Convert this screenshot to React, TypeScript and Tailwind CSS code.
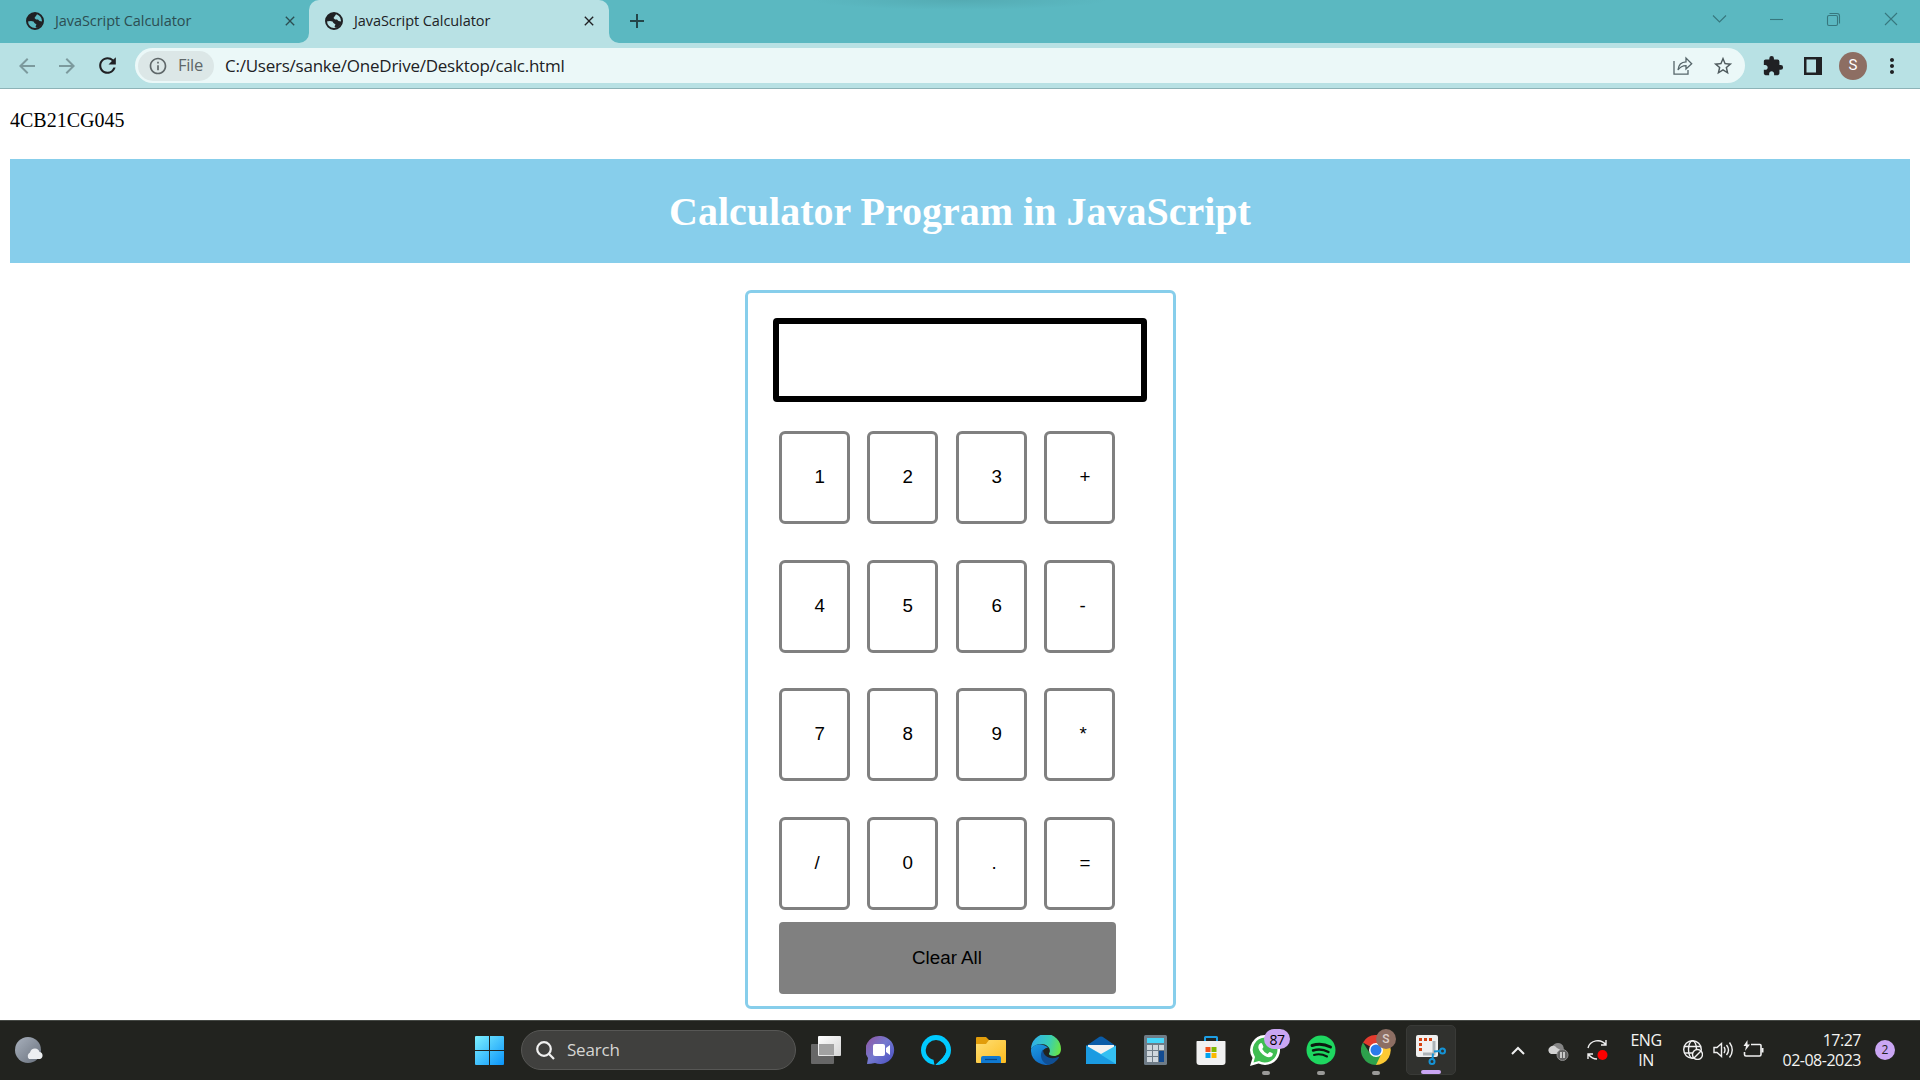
import type { ReactNode } from 'react';
import {
  MdArrowBack,
  MdArrowForward,
  MdClose,
  MdExtension,
  MdInfoOutline,
  MdMoreVert,
  MdRefresh,
  MdStarBorder,
} from 'react-icons/md';

function Globe() {
  return (
    <svg width="18" height="18" viewBox="0 0 18 18" className="ml-[2px] mr-[2px] shrink-0">
      <circle cx="9" cy="9" r="8" fill="none" stroke="#202124" strokeWidth="2" />
      <path d="M1 8C1.500 4 5 1 9.500 1L11 2.500L9.500 4.500L8.500 6L10 7.500H12L13.500 9L16 9.500L16.500 11L14 14.500L11 16L9.500 14.500L10.500 12.500L8.500 11L7.500 9.500L5 9L1.500 9.500Z" fill="#202124" />
    </svg>
  );
}

function Tab({ active }: { active?: boolean }) {
  return (
    <div
      className={
        active
          ? 'flex h-[43px] w-[300px] items-center rounded-t-[10px] bg-[#b8e1e4] pb-[2px] pl-[14px] text-[#202124]'
          : 'flex h-[43px] w-[299px] items-center pb-[2px] pl-[24px] text-[#2c4e52]'
      }
    >
      <Globe />
      <span className="ml-[9px] w-[227px] shrink-0 whitespace-nowrap text-[14.5px] tracking-[-0.07px]">
        JavaScript Calculator
      </span>
      <MdClose size={16} className="shrink-0" />
    </div>
  );
}

function Flare({ d }: { d: string }) {
  return (
    <svg width="10" height="10" className="shrink-0 self-end" viewBox="0 0 10 10">
      <path d={d} fill="#b8e1e4" />
    </svg>
  );
}

function TitleBar() {
  return (
    <div className="relative flex h-[43px] items-center bg-[#5bb8c1]">
      <div className="absolute left-[810px] top-0 h-[10px] w-[300px] bg-[radial-gradient(ellipse_at_top,#54abb3,#5bb8c1_70%)]" />
      <Tab />
      <Flare d="M10 0V10H0A10 10 0 0 0 10 0Z" />
      <Tab active />
      <Flare d="M0 0V10H10A10 10 0 0 1 0 0Z" />
      <svg width="16" height="16" viewBox="0 0 16 16" className="mb-[1px] ml-[10px]" stroke="#24464a" strokeWidth="2">
        <path d="M8 1V15M1 8H15" />
      </svg>
      <svg width="186" height="16" viewBox="0 0 186 16" className="mb-[6px] ml-auto mr-[22px]" fill="none" stroke="#37777e" strokeWidth="1.1">
        <path d="M1 4.500L7.500 11L14 4.500" />
        <path d="M58 8.500H71" />
        <rect x="115.500" y="4.500" width="10" height="10" rx="1.500" />
        <path d="M117.500 2.500H125Q127.500 2.500 127.500 5V12.500" />
        <path d="M173 2L185 14M185 2L173 14" />
      </svg>
    </div>
  );
}

function Toolbar() {
  return (
    <div className="flex h-[46px] items-center border-b border-[#8db3b7] bg-[#b8e1e4]">
      <MdArrowBack size={24} className="ml-[15px] text-[#7c9a9d]" />
      <MdArrowForward size={24} className="ml-[16px] text-[#7c9a9d]" />
      <MdRefresh size={25} className="ml-[16px] text-[#202124]" />
      <div className="ml-[15px] flex h-[35px] w-[1610px] items-center rounded-full bg-[#ebf8f8]">
        <div className="ml-[3px] flex h-[30px] w-[76px] items-center rounded-full bg-[#dce7e7] pl-[10px] text-[#5f6769]">
          <MdInfoOutline size={20} />
          <span className="ml-[10px] text-[16.500px] tracking-[-0.3px]">File</span>
        </div>
        <span className="ml-[11px] whitespace-nowrap text-[17px] tracking-[-0.24px] text-[#202124]">
          C:/Users/sanke/OneDrive/Desktop/calc.html
        </span>
        <svg width="20" height="20" viewBox="0 0 20 20" className="ml-auto" fill="none" stroke="#56666a" strokeWidth="1.300">
          <path d="M1 5V18.200H15V14" />
          <path d="M5 14C5.500 8.500 8.500 6 13 5.800V2L18.700 7.700L13 13V9.600C9.500 9.600 7 11 5 14Z" />
        </svg>
        <MdStarBorder size={22} className="ml-[19px] mr-[11px] text-[#4f5b5e]" />
      </div>
      <MdExtension size={22} className="ml-[17px] text-[#202124]" />
      <svg width="18" height="18" viewBox="0 0 18 18" className="ml-[20px]">
        <path d="M0 0H18V18H0ZM2.500 2.500V15.500H12V2.500Z" fill="#202124" fillRule="evenodd" />
      </svg>
      <div className="ml-[17px] flex h-7 w-7 items-center justify-center rounded-full bg-[#8d6e63] font-['Roboto'] text-[15px] text-white">
        S
      </div>
      <MdMoreVert size={24} className="ml-[13px] text-[#202124]" />
    </div>
  );
}

const keys = ['1', '2', '3', '+', '4', '5', '6', '-', '7', '8', '9', '*', '/', '0', '.', '='];

function Calculator() {
  return (
    <div className="mx-auto mt-[27px] h-[719px] w-[431px] rounded-[6px] border-[3px] border-[#87ceeb] font-['Liberation_Sans',sans-serif] text-[18.750px] text-black">
      <div className="ml-[25px] mt-[25px] h-[84px] w-[374px] rounded-[4px] border-[6px] border-black" />
      <div className="ml-[31px] mt-[29px] grid grid-cols-[88px_89px_88px_71px] grid-rows-[129px_128px_129px_93px]">
        {keys.map((k) => (
          <button
            key={k}
            className="flex h-[93px] w-[71px] items-center rounded-[6px] border-[3px] border-[#808080] pl-[33px] text-left"
          >
            {k}
          </button>
        ))}
      </div>
      <button className="ml-[31px] mt-[12px] block h-[72px] w-[337px] rounded-[4px] bg-[#808080]">Clear All</button>
    </div>
  );
}

function Slot({ children, dot }: { children: ReactNode; dot?: boolean }) {
  return (
    <div className="relative flex h-[50px] w-[55px] shrink-0 items-center justify-center">
      {children}
      {dot && <div className="absolute bottom-0 h-[4px] w-[8px] rounded-full bg-[#9a9a98]" />}
    </div>
  );
}

function Windows() {
  return (
    <svg width="29" height="29" viewBox="0 0 29 29">
      <defs>
        <linearGradient id="win" x1="0" y1="0" x2="1" y2="1">
          <stop offset="0" stopColor="#7df0ff" />
          <stop offset="1" stopColor="#0a94fa" />
        </linearGradient>
      </defs>
      <path fill="url(#win)" d="M1 0H14V14H0V1Q0 0 1 0ZM15 0H28Q29 0 29 1V14H15ZM0 15H14V29H1Q0 29 0 28ZM15 15H29V28Q29 29 28 29H15Z" />
    </svg>
  );
}

function TaskView() {
  return (
    <svg width="30" height="28" viewBox="0 0 30 28">
      <defs>
        <linearGradient id="tv" x1="0" y1="0" x2="1" y2="1">
          <stop offset="0" stopColor="#ffffff" />
          <stop offset="1" stopColor="#d5d5d5" />
        </linearGradient>
      </defs>
      <rect x="0" y="8" width="23" height="20" rx="1" fill="#676767" />
      <rect x="7" y="0" width="23" height="20" rx="1" fill="url(#tv)" />
      <path d="M8 8H23V19H8Z" fill="#a2a2a2" />
    </svg>
  );
}

function Chat() {
  return (
    <svg width="30" height="30" viewBox="0 0 30 30">
      <defs>
        <linearGradient id="chat" x1="0.100" y1="0.200" x2="0.900" y2="0.900">
          <stop offset="0" stopColor="#8a5fae" />
          <stop offset="0.450" stopColor="#7479cf" />
          <stop offset="1" stopColor="#5055c4" />
        </linearGradient>
      </defs>
      <path d="M15 1A14 14 0 1 1 9 28Q5 29 1 29L2 23A14 14 0 0 1 15 1Z" fill="url(#chat)" />
      <rect x="7" y="9" width="12" height="12" rx="2" fill="#fff" />
      <path d="M20 13L24 10V20L20 17Z" fill="#fff" />
    </svg>
  );
}

function Alexa() {
  return (
    <svg width="30" height="30" viewBox="0 0 30 30">
      <circle cx="15" cy="15" r="15" fill="#00caff" />
      <path d="M15 5A10.300 10.300 0 0 1 25.300 15C25.300 21 19 25 14.500 30L13.500 30L12.500 24.800C8 23.500 4.700 20 4.700 15A10.300 10.300 0 0 1 15 5Z" fill="#22231f" />
      <path d="M25.300 15C25.300 21 19 25 14.500 30A15 15 0 0 0 27 24Z" fill="#00caff" />
    </svg>
  );
}

function Explorer() {
  return (
    <svg width="30" height="28" viewBox="0 0 30 28">
      <defs>
        <linearGradient id="fold" x1="0" y1="0" x2="1" y2="1">
          <stop offset="0" stopColor="#ffdf75" />
          <stop offset="1" stopColor="#fcbc1f" />
        </linearGradient>
      </defs>
      <path d="M0 2Q0 1 1 1H10L13 4V10H0Z" fill="#e29d0b" />
      <path d="M0 8H10L13 4H29Q30 4 30 5V26Q30 27 29 27H1Q0 27 0 26Z" fill="url(#fold)" />
      <path d="M5 27V22Q5 20 7 20H23Q25 20 25 22V27Z" fill="#1079d0" />
      <path d="M9 23.500H21" stroke="#064788" strokeWidth="1.200" />
    </svg>
  );
}

function Edge() {
  return (
    <svg width="30" height="30" viewBox="0 0 30 30">
      <defs>
        <linearGradient id="edgeTop" x1="0" y1="0.500" x2="1" y2="0.700">
          <stop offset="0" stopColor="#2fb0ea" />
          <stop offset="0.550" stopColor="#39cdb6" />
          <stop offset="1" stopColor="#6be53f" />
        </linearGradient>
        <linearGradient id="edgeLow" x1="0" y1="0" x2="0.600" y2="1">
          <stop offset="0" stopColor="#1c9ce2" />
          <stop offset="1" stopColor="#0f66c0" />
        </linearGradient>
      </defs>
      <path d="M0 14A15 15 0 0 1 30 14C30 19 26.500 21 23 21C19 21 17 19.500 18.500 17.500C20 14 17 9 10 9Q4 9 0 14Z" fill="url(#edgeTop)" />
      <path d="M0 14Q4 8.500 10.500 9.500Q15 10.500 17 12.500Q11.500 13.500 11 18C10.700 24 17 29 23 27.500A15 15 0 0 1 0 14Z" fill="url(#edgeLow)" />
      <path d="M12 14.500C8 19 10 27.500 17 29.800Q24 29 28 22.500Q28 21.500 27 22C19 25.500 12 21 12 14.500Z" fill="#104f94" />
    </svg>
  );
}

function Mail() {
  return (
    <svg width="30" height="28" viewBox="0 0 30 28">
      <path d="M0 10L13.500 .8Q15 0 16.500 .8L30 10V14H0Z" fill="#0a5ca8" />
      <path d="M2 9H28V14L15 22L2 14Z" fill="#f2f2f2" />
      <path d="M0 9.500L15 18L30 9.500V28H0Z" fill="#34c0f2" />
      <path d="M0 9.500L30 28H1Q0 28 0 27Z" fill="#1b9be2" />
    </svg>
  );
}

function CalcIcon() {
  const cells = [0, 1, 2].flatMap((r) => [0, 1, 2].map((c) => ({ r, c })));
  return (
    <svg width="23" height="30" viewBox="0 0 23 30">
      <rect width="23" height="30" rx="1.500" fill="#6f7c87" />
      <rect x="3" y="3" width="17" height="5" fill="#47d6fa" />
      {cells.map(({ r, c }) => (
        <rect key={`${r}${c}`} x={3 + c * 6} y={10 + r * 6} width="5" height="5" fill="#d0d7dd" />
      ))}
      <rect x="15" y="16" width="5" height="11" fill="#124b91" />
    </svg>
  );
}

function Store() {
  return (
    <svg width="30" height="30" viewBox="0 0 30 30">
      <path d="M9 6V2.500Q9 2 9.500 2H20.500Q21 2 21 2.500V6" fill="none" stroke="#1d9ee3" strokeWidth="2" />
      <path d="M1 6H29Q29.500 6 29.500 7V27Q29.500 30 26.500 30H3.500Q.5 30 .5 27V7Q.5 6 1 6Z" fill="#f1f1f1" />
      <path d="M9.500 12H14.500V17H9.500Z" fill="#f1511b" />
      <path d="M15.500 12H20.500V17H15.500Z" fill="#80b900" />
      <path d="M9.500 18H14.500V23H9.500Z" fill="#00a3ee" />
      <path d="M15.500 18H20.500V23H15.500Z" fill="#fbb900" />
    </svg>
  );
}

function WhatsApp() {
  return (
    <svg width="31" height="31" viewBox="0 0 31 31">
      <path d="M15.500 0A15 15 0 1 1 8.500 28.500L0 31L2.500 23A15 15 0 0 1 15.500 0Z" fill="#fff" />
      <path d="M15.500 2.500A12.500 12.500 0 1 1 9 26L3.500 27.500L5 22A12.500 12.500 0 0 1 15.500 2.500Z" fill="#3fbd51" />
      <path d="M10 8.500Q11.500 7.500 12.300 9L13.400 11.700Q13.500 12.500 12.200 14Q14 17.500 17.500 19L19.300 17.200Q20 16.800 22.500 18.300Q23.500 19 22 21Q19.500 23.300 15 20.900Q9.500 17.800 8.400 13Q8 10 10 8.500Z" fill="#fff" />
    </svg>
  );
}

function Spotify() {
  return (
    <svg width="30" height="30" viewBox="0 0 30 30">
      <circle cx="15" cy="15" r="14.500" fill="#1ed760" />
      <g fill="none" stroke="#0b1a10" strokeLinecap="round">
        <path d="M6 10.500Q15.500 7.500 24.500 12" strokeWidth="2.900" />
        <path d="M7 15.500Q15 13 22.500 17" strokeWidth="2.400" />
        <path d="M8 20Q14.500 18 21 21.500" strokeWidth="2" />
      </g>
    </svg>
  );
}

function Chrome() {
  return (
    <svg width="30" height="30" viewBox="0 0 30 30">
      <path d="M15 15L2 7.500A15 15 0 0 1 28 7.500Z" fill="#e33b2e" />
      <path d="M15 15V8H28A15 15 0 0 1 15 30Z" fill="#fcc934" />
      <path d="M2 7.500L9 18.500Q12 22.500 20 19.500L15 30A15 15 0 0 1 2 7.500Z" fill="#2da14c" />
      <circle cx="15" cy="15" r="7" fill="#fff" />
      <circle cx="15" cy="15" r="5.500" fill="#2b7bea" />
    </svg>
  );
}

function Snip() {
  return (
    <svg width="30" height="30" viewBox="0 0 30 30">
      <rect width="22" height="22" rx="2" fill="#f0f0f0" />
      <path d="M3 3H6V6H3ZM8 3H11V6H8ZM13 3H16V6H13ZM3 8H6V11H3ZM3 13H6V16H3Z" fill="#d5400f" />
      <path d="M18 6V19H7" fill="none" stroke="#aeb3b7" strokeWidth="3" />
      <path d="M18 16.500L25 16M17 18.500L16.500 24" stroke="#1593d6" strokeWidth="2" />
      <g fill="none" stroke="#1593d6" strokeWidth="2">
        <circle cx="26.500" cy="16" r="2.500" />
        <circle cx="16" cy="26.500" r="2.500" />
      </g>
    </svg>
  );
}

function Tray() {
  return (
    <div className="ml-auto flex h-full items-center text-[16px] text-[#f4f4f2]">
      <svg width="14" height="9" viewBox="0 0 14 9" fill="none" stroke="#f0f0f0" strokeWidth="2">
        <path d="M1 8L7 2L13 8" />
      </svg>
      <svg width="22" height="20" viewBox="0 0 22 20" className="ml-[22px] mt-[4px]">
        <path d="M5 5Q7 1 11 1Q15 1 16.500 5L17 8L9 10Z" fill="#858585" />
        <path d="M4 12A4 4 0 0 1 3 5Q7 2 10 6L17 10V12Z" fill="#d2d2d2" />
        <circle cx="15.500" cy="13" r="5.500" fill="#636363" stroke="#8a8a8a" />
        <path d="M14 10V16M17 10V16" stroke="#fff" strokeWidth="1.300" />
      </svg>
      <svg width="21" height="22" viewBox="0 0 21 22" className="ml-[18px]" fill="none" stroke="#f0f0f0" strokeWidth="1.400">
        <path d="M1 9C3 1 14-1 19 6M19 1V6H14" />
        <path d="M1 20V15H6M1.500 15.500Q5 20 10 20" />
        <circle cx="15.500" cy="16" r="5" fill="#f00" stroke="none" />
      </svg>
      <div className="ml-[20px] w-[36px] text-center leading-[20px] tracking-[-0.5px]">
        ENG
        <br />
        IN
      </div>
      <svg width="20" height="20" viewBox="0 0 20 20" className="ml-[19px]" fill="none" stroke="#f0f0f0" strokeWidth="1.400">
        <circle cx="9.500" cy="9.500" r="8.800" />
        <ellipse cx="9.500" cy="9.500" rx="4" ry="8.800" />
        <path d="M1 6.500H18M1 13H10" />
        <circle cx="14.500" cy="14.500" r="5" fill="#22231f" />
        <path d="M11 18L18 11" />
      </svg>
      <svg width="21" height="18" viewBox="0 0 21 18" className="ml-[10px]" fill="none" stroke="#f0f0f0" strokeWidth="1.400">
        <path d="M1 6.500H4L8.500 2.500V15.500L4 11.500H1Z" />
        <path d="M11 6Q13 9 11 12M13.500 4Q17.500 9 13.500 14M16.500 1.500Q22 9 16.500 16.500" />
      </svg>
      <svg width="21" height="18" viewBox="0 0 21 18" className="mb-[2px] ml-[9px]" fill="none" stroke="#f0f0f0" strokeWidth="1.600">
        <path d="M8 4.500H17Q18 4.500 18 5.500V14.500Q18 16 16.500 16H3Q1.500 16 1.500 14.500V12" />
        <path d="M19.500 8V12.500" strokeWidth="2" />
        <path d="M4.500 0L.5 6H3L2 11L7 4.500H4.500Z" fill="#f0f0f0" stroke="none" />
      </svg>
      <div className="ml-[17px] w-[80px] whitespace-nowrap text-right leading-[20px] tracking-[-0.500px]">
        17:27
        <br />
        02-08-2023
      </div>
      <div className="ml-[14px] mr-[25px] flex h-5 w-5 items-center justify-center rounded-full bg-[#caa6f3] text-[12px] text-[#222]">
        2
      </div>
    </div>
  );
}

function Taskbar() {
  return (
    <div className="flex h-[60px] items-center border-t border-[#454844] bg-[#22231f] pb-[1px]">
      <svg width="30" height="28" viewBox="0 0 30 28" className="ml-[14px]">
        <defs>
          <linearGradient id="moon" x1="0" y1="0" x2="1" y2="1">
            <stop offset="0" stopColor="#a9b1bd" />
            <stop offset="1" stopColor="#68707c" />
          </linearGradient>
        </defs>
        <circle cx="14" cy="14" r="13" fill="url(#moon)" />
        <path d="M15 23A4 4 0 0 1 16 16.500Q17 12.500 21 12.500Q24.500 12.500 25.500 16A3.600 3.600 0 0 1 26 23Z" fill="#eceef1" />
      </svg>
      <div className="ml-[431px] flex items-center">
        <Windows />
        <div className="ml-[17px] flex h-10 w-[275px] items-center rounded-full border border-[#575755] bg-[#40403e] pl-[14px]">
          <svg width="19" height="19" viewBox="0 0 19 19" fill="none" stroke="#f0f0f0" strokeWidth="2.200">
            <circle cx="8" cy="8" r="6.800" />
            <path d="M12.800 12.800L18 18" />
          </svg>
          <span className="ml-[12px] text-[17px] tracking-[-0.200px] text-[#d6d6d4]">Search</span>
        </div>
        <div className="ml-[2px] flex items-center">
          <Slot><TaskView /></Slot>
          <Slot><Chat /></Slot>
          <Slot><Alexa /></Slot>
          <Slot><Explorer /></Slot>
          <Slot><Edge /></Slot>
          <Slot><Mail /></Slot>
          <Slot><CalcIcon /></Slot>
          <Slot><Store /></Slot>
          <Slot dot>
            <WhatsApp />
            <span className="absolute right-[3px] top-[4px] flex h-5 w-[26px] items-center justify-center rounded-full bg-[#caa6f3] text-[14px] tracking-[-0.5px] text-black">
              87
            </span>
          </Slot>
          <Slot dot><Spotify /></Slot>
          <Slot dot>
            <Chrome />
            <span className="absolute right-[7px] top-[4px] flex h-5 w-5 items-center justify-center rounded-full bg-[#8d6e63] font-['Roboto'] text-[12px] font-medium text-[#dccfca]">
              S
            </span>
          </Slot>
          <div className="relative ml-[3px] flex h-[50px] w-[50px] items-center justify-center rounded-[5px] border border-[#393a37] bg-[#30312e]">
            <Snip />
            <div className="absolute bottom-0 h-[4px] w-[20px] rounded-full bg-[#caa6f3]" />
          </div>
        </div>
      </div>
      <Tray />
    </div>
  );
}

export default function App() {
  return (
    <div className="flex h-[1080px] w-[1920px] flex-col overflow-hidden bg-white font-['Open_Sans',sans-serif]">
      <TitleBar />
      <Toolbar />
      <main className="flex-1 px-[10px] font-['Liberation_Serif',serif]">
        <p className="pt-[20px] text-[20px] leading-[23px] text-black">4CB21CG045</p>
        <header className="mt-[27px] flex h-[104px] items-center justify-center bg-[#87ceeb] pt-[2px]">
          <h1 className="text-[40px] font-bold leading-[46px] text-white">Calculator Program in JavaScript</h1>
        </header>
        <Calculator />
      </main>
      <Taskbar />
    </div>
  );
}
